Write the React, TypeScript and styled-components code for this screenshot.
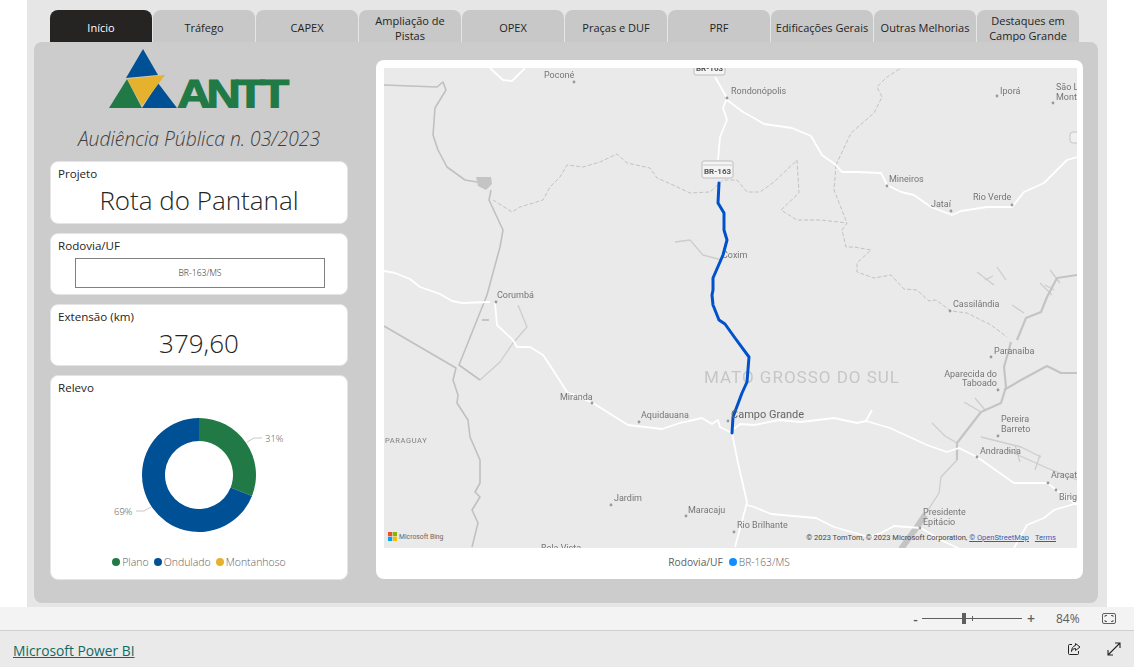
import React from 'react';
import styled, { createGlobalStyle } from 'styled-components';

const GlobalStyle = createGlobalStyle`
  html, body {
    margin: 0;
    padding: 0;
    background: #fff;
    overflow: hidden;
  }
  body {
    font-family: "Open Sans", "Noto Sans", sans-serif;
    color: #252423;
  }
`;

const Page = styled.div`
  width: 1134px;
  height: 667px;
  display: flex;
  flex-direction: column;
`;

const Report = styled.div`
  width: 1080px;
  height: 607px;
  margin-left: 27px;
  padding-top: 10px;
  box-sizing: border-box;
  background: #e6e6e6;
`;

const TabRow = styled.div`
  display: grid;
  grid-template-columns: repeat(10, 102px);
  gap: 1px;
  margin-left: 23px;
  height: 32px;
`;

const Tab = styled.div<{ $active?: boolean }>`
  display: flex;
  align-items: center;
  justify-content: center;
  height: 36px;
  box-sizing: border-box;
  border-radius: 8px 8px 0 0;
  background: ${props => (props.$active ? '#252423' : '#c8c8c8')};
  color: ${props => (props.$active ? '#ffffff' : '#252423')};
  font-size: 11px;
  line-height: 15.5px;
  text-align: center;
`;

const Panel = styled.div`
  position: relative;
  display: flex;
  gap: 28px;
  width: 1064px;
  height: 561px;
  margin-left: 7px;
  padding: 6px 15px 23px 16px;
  box-sizing: border-box;
  border-radius: 8px;
  background: #cccccc;
`;

const LeftColumn = styled.div`
  display: flex;
  flex-direction: column;
  width: 298px;
  flex: none;
`;

const LogoBox = styled.div`
  display: flex;
  justify-content: center;
  height: 60px;
`;

const Title = styled.div`
  margin: 20px 0 11px;
  font-size: 19.3px;
  line-height: 22.3px;
  font-weight: 300;
  font-style: italic;
  text-align: center;
  white-space: nowrap;
  color: #3d3c3b;
`;

const CardStack = styled.div`
  display: flex;
  flex-direction: column;
  gap: 9px;
  flex: 1;
`;

const Card = styled.div`
  height: 62.3px;
  box-sizing: border-box;
  padding: 4px 7px 0;
  border-radius: 8px;
  border: 1px solid #e4e4e4;
  background: #fff;
`;

const ChartCard = styled(Card)`
  display: flex;
  flex-direction: column;
  height: auto;
  flex: 1;
`;

const CardLabel = styled.div`
  font-size: 11.6px;
  line-height: 16px;
  font-weight: 500;
  color: #252423;
`;

const BigValue = styled.div`
  font-size: 26px;
  line-height: 36px;
  font-weight: 300;
  text-align: center;
  color: #252423;
`;

const SlicerBox = styled.div`
  display: flex;
  align-items: center;
  justify-content: center;
  height: 30px;
  margin: 4px 15px 0 17px;
  box-sizing: border-box;
  border: 1px solid #808080;
  font-size: 8.6px;
  font-weight: 300;
  color: #252423;
`;

const DonutSvg = styled.svg`
  display: block;
  width: 296px;
  height: 159px;
  margin: 0 -7px;
  flex: none;
`;

const Legend = styled.div<{ $gap: number }>`
  display: flex;
  align-items: center;
  justify-content: center;
  gap: ${props => props.$gap}px;
  font-size: 10.5px;
  font-weight: 300;
  color: #605e5c;
`;

const LegendItem = styled.span`
  display: flex;
  align-items: center;
  gap: 2px;
`;

const Dot = styled.i<{ $color: string }>`
  width: 8px;
  height: 8px;
  border-radius: 50%;
  background: ${props => props.$color};
`;

const MapCard = styled.div`
  display: flex;
  flex-direction: column;
  width: 707px;
  height: 519px;
  margin-top: 12px;
  padding: 8px 6px 0 8px;
  box-sizing: border-box;
  border-radius: 8px;
  background: #fff;
`;

const MapArea = styled.div`
  position: relative;
  width: 693px;
  height: 480px;
  flex: none;
  overflow: hidden;
  background: #eaeaea;
`;

const MapSvg = styled.svg`
  display: block;
  width: 693px;
  height: 480px;
  filter: blur(0.3px);
  font-family: Roboto, "Liberation Sans", sans-serif;
`;

const Attribution = styled.div`
  position: absolute;
  right: 21px;
  bottom: 5px;
  font-family: Roboto, "Liberation Sans", sans-serif;
  font-size: 7.5px;
  line-height: 10px;
  color: #444;
  white-space: nowrap;

  a {
    color: #3b5bb5;
    text-decoration: underline;
  }
  a + a {
    margin-left: 4px;
  }
`;

const BingMark = styled.div`
  position: absolute;
  left: 4px;
  bottom: 7px;
  display: flex;
  align-items: center;
  gap: 2px;
  font-family: Roboto, "Liberation Sans", sans-serif;
  font-size: 6.8px;
  color: #666;

  svg {
    display: block;
  }
`;

const MapLegend = styled(Legend)`
  height: 27px;
  font-size: 10.2px;
  margin-right: 3px;
`;

const LegendTitle = styled.span`
  margin-right: 6px;
  font-weight: 400;
  color: #605e5c;
`;

const ZoomBar = styled.div`
  display: flex;
  align-items: center;
  height: 23px;
  border-bottom: 1px solid #cfcfcf;
  background: #f3f3f3;
  padding-left: 912px;
  font-size: 12px;
  color: #605e5c;
`;

const ZoomButton = styled.span`
  width: 7px;
  font-size: 14px;
  line-height: 14px;
  font-weight: 600;
  text-align: center;
`;

const ZoomTrack = styled.div`
  position: relative;
  width: 100px;
  height: 1px;
  margin: 0 5px 0 3px;
  background: #605e5c;
`;

const ZoomThumb = styled.i`
  position: absolute;
  left: 40px;
  top: -5px;
  width: 4px;
  height: 11px;
  background: #605e5c;
`;

const ZoomTick = styled.i`
  position: absolute;
  left: 50px;
  top: -2px;
  width: 1px;
  height: 5px;
  background: #605e5c;
`;

const ZoomValue = styled.span`
  margin-left: 22px;
  width: 23px;
  white-space: nowrap;
`;

const FitIcon = styled.svg`
  margin-left: 23px;
  display: block;
`;

const Footer = styled.div`
  display: flex;
  align-items: center;
  justify-content: space-between;
  flex: 1;
  padding: 3px 13px 0;
  background: #eaeaea;
`;

const PowerBiLink = styled.a`
  font-size: 13.8px;
  color: #0f6a62;
  text-decoration: underline;
`;

const FooterIcons = styled.div`
  display: flex;
  align-items: center;
  gap: 26px;
  margin-top: -3px;

  svg {
    display: block;
  }
`;

const tabs = [
  'Início',
  'Tráfego',
  'CAPEX',
  'Ampliação de Pistas',
  'OPEX',
  'Praças e DUF',
  'PRF',
  'Edificações Gerais',
  'Outras Melhorias',
  'Destaques em Campo Grande',
];

const roads = [
  '490,68 503,80 512,81 525,68',
  '715,77 727,98 723,108 727,120 720,137 718,160',
  '727,100 743,112 754,118 764,124 792,128 811,136 822,155 836,165 842,172 857,172 881,173 887,185 901,192 914,195 931,207 952,215 961,211 987,207 1012,207 1024,192 1044,183 1067,160 1077,157',
  '384,271 395,273 410,279 420,287 440,294 452,301 462,303 490,302',
  '495,303 497,325 513,340 517,347 530,347 543,355 553,370 567,392 593,403 628,425 662,429 680,423 702,418 712,424 718,420 720,427 730,432 740,424 754,425 779,420 801,422 834,418 857,423 866,421 890,428 927,445 947,452 959,448 977,457 1014,483 1047,483 1077,505',
  '866,421 872,410',
  '732,433 738,463 747,502 745,510 735,547',
  '747,505 754,507 771,514 816,518 834,527 869,537 881,533 894,526 921,528 941,540 960,549',
  '1014,548 1027,525 1044,518 1054,510 1077,503',
];

const borders = [
  '384,85 437,87 443,82 446,90 435,108 433,135 438,150 447,167 465,180 477,182',
  '491,190 489,200 503,230 500,247 487,295 459,365 480,380',
  '384,326 456,368 453,380 458,395 457,403 468,420 470,437 480,460 480,483 475,492 480,497 472,510 478,523 472,547',
];

const thinRivers = [
  '480,380 500,362 513,343 527,327 518,305',
  '675,242 690,240 703,255 722,260',
  '957,460 941,477 939,493 917,527',
  '1045,285 1054,290',
  '1050,270 1060,283',
  '1040,283 1052,295',
  '977,272 994,285',
  '985,280 993,276',
  '997,267 1006,280',
  '1012,305 1024,313',
  '932,423 945,436 957,443',
  '964,402 981,412',
  '975,398 985,410',
  '981,437 1021,447 1041,457',
  '1007,450 1047,468 1077,480',
  '1015,445 1020,462',
  '1040,455 1035,470',
];

const mainRivers = [
  '1011,342 1004,367 1006,387 1001,403 981,412 957,443 957,460',
  '1004,390 1021,380 1047,366 1061,373 1077,373',
  '1017,340 1026,318 1041,312 1047,297 1057,278 1077,275',
];

const dashed = [
  '493,200 512,212 520,207 543,200 550,187 560,177 567,165 583,167 600,162 617,154 627,163 650,168 657,178 673,185 690,193 710,192 723,180 737,180 747,192 760,192 774,182 797,160 799,193 781,210 797,220 821,220 847,223 842,230 846,247 854,247 871,250 857,263 857,272 874,278 891,275 904,289 917,290 929,301 936,300 951,311 967,313 991,325 1007,337',
  '836,165 834,190 847,223',
  '836,165 851,133 874,113 882,97 877,87 887,77 901,68',
];

const route =
  '719,183 718,203 724,213 724,230 727,240 723,255 713,278 713,290 712,295 713,305 719,320 725,324 735,338 749,357 747,382 742,393 733,417 732,433';

const cityDots = [
  [574, 82], [727, 98], [997, 96], [1053, 103], [887, 186], [951, 211], [1012, 205],
  [496, 302], [592, 403], [639, 422], [728, 421], [950, 311], [991, 357], [998, 390],
  [998, 436], [977, 457], [1048, 483], [1056, 490], [920, 528], [611, 505], [686, 516], [734, 532],
];

const cityLabels: { text: string; x: number; y: number; end?: boolean }[] = [
  { text: 'Poconé', x: 544, y: 78 },
  { text: 'Rondonópolis', x: 731, y: 94 },
  { text: 'Iporá', x: 1000, y: 94 },
  { text: 'São Luís de', x: 1056, y: 90 },
  { text: 'Montes Belos', x: 1056, y: 100 },
  { text: 'Mineiros', x: 889, y: 182 },
  { text: 'Jataí', x: 931, y: 207 },
  { text: 'Rio Verde', x: 973, y: 200 },
  { text: 'Coxim', x: 722, y: 258 },
  { text: 'Corumbá', x: 497, y: 298 },
  { text: 'Miranda', x: 560, y: 400 },
  { text: 'Aquidauana', x: 641, y: 418 },
  { text: 'Cassilândia', x: 953, y: 307 },
  { text: 'Paranaíba', x: 994, y: 354 },
  { text: 'Aparecida do', x: 997, y: 377, end: true },
  { text: 'Taboado', x: 997, y: 386, end: true },
  { text: 'Pereira', x: 1001, y: 422 },
  { text: 'Barreto', x: 1001, y: 432 },
  { text: 'Andradina', x: 980, y: 454 },
  { text: 'Araçatuba', x: 1051, y: 478 },
  { text: 'Birigui', x: 1059, y: 500 },
  { text: 'Presidente', x: 923, y: 515 },
  { text: 'Epitácio', x: 923, y: 525 },
  { text: 'Jardim', x: 614, y: 501 },
  { text: 'Maracaju', x: 688, y: 513 },
  { text: 'Rio Brilhante', x: 737, y: 528 },
  { text: 'Bela Vista', x: 541, y: 551 },
];

const donutPath = (start: number, end: number) => {
  const R = 57;
  const r = 34;
  const pt = (rad: number, frac: number) => {
    const a = frac * 2 * Math.PI - Math.PI / 2;
    return `${(148 + rad * Math.cos(a)).toFixed(2)} ${(79 + rad * Math.sin(a)).toFixed(2)}`;
  };
  const large = end - start > 0.5 ? 1 : 0;
  return `M${pt(R, start)} A${R} ${R} 0 ${large} 1 ${pt(R, end)} L${pt(r, end)} A${r} ${r} 0 ${large} 0 ${pt(r, start)} Z`;
};

const Logo = () => (
  <svg width="182" height="60" viewBox="109 48 182 60">
    <polygon points="144,49 127,78 159,75" fill="#005096" />
    <polygon points="110,108 128,79 143,108" fill="#217a45" />
    <polygon points="143,108 159,83 178,108" fill="#005096" />
    <polygon points="128,79 166,75 143,106" fill="#e6b22e" />
    <text
      transform="translate(178 107.6) scale(1.17 1)"
      letterSpacing="-4"
      fontFamily="Liberation Sans, sans-serif"
      fontWeight="700"
      fontSize="40.5"
      fill="#217a45"
      stroke="#217a45"
      strokeWidth="1.2"
    >
      ANTT
    </text>
  </svg>
);

const Shield = ({ x, y }: { x: number; y: number }) => (
  <g>
    <rect x={x} y={y} width="31" height="17" rx="2" fill="#f4f4f4" stroke="#bdbdbd" />
    <line x1={x + 1} y1={y + 4} x2={x + 30} y2={y + 4} stroke="#c8c8c8" />
    <text x={x + 15.5} y={y + 13} fontSize="8" fontWeight="700" textAnchor="middle" fill="#555">
      BR-163
    </text>
  </g>
);

const MapDrawing = () => (
  <MapSvg viewBox="384 68 693 480">
    {thinRivers.map(p => (
      <polyline key={p} points={p} fill="none" stroke="#cdcdcd" strokeWidth="1.3" strokeLinejoin="round" />
    ))}
    {mainRivers.map(p => (
      <polyline key={p} points={p} fill="none" stroke="#c4c4c4" strokeWidth="2.2" strokeLinejoin="round" />
    ))}
    <polyline points="925,515 917,527 901,549" fill="none" stroke="#c4c4c4" strokeWidth="6" />
    <polygon points="476,177 491,177 492,184 486,190 478,186" fill="#c4c4c4" />
    <rect x="482" y="319" width="7" height="2" fill="#c4c4c4" />
    {borders.map(p => (
      <polyline key={p} points={p} fill="none" stroke="#c0c0c0" strokeWidth="1.6" strokeLinejoin="round" />
    ))}
    {dashed.map(p => (
      <polyline key={p} points={p} fill="none" stroke="#bdbdbd" strokeWidth="0.9" strokeDasharray="4 2" />
    ))}
    {roads.map(p => (
      <polyline key={p} points={p} fill="none" stroke="#ffffff" strokeWidth="1.8" strokeLinejoin="round" />
    ))}
    {cityDots.map(([x, y]) => (
      <circle key={`${x}-${y}`} cx={x} cy={y} r="1.4" fill="#9a9a9a" />
    ))}
    {cityLabels.map(c => (
      <text key={c.text} x={c.x} y={c.y} fontSize="9" fill="#767676" textAnchor={c.end ? 'end' : 'start'}>
        {c.text}
      </text>
    ))}
    <text x="704" y="383" fontSize="17" letterSpacing="1" fill="#c6c6c6">
      MATO GROSSO DO SUL
    </text>
    <text x="385" y="443" fontSize="7.5" letterSpacing="0.6" fill="#808080">
      PARAGUAY
    </text>
    <polyline points={route} fill="none" stroke="#0052cc" strokeWidth="3" strokeLinejoin="round" strokeLinecap="round" />
    <text x="731" y="418" fontSize="11" fill="#666">
      Campo Grande
    </text>
    <Shield x={702} y={161} />
    <Shield x={694} y={58} />
    <rect x="1070" y="132" width="14" height="11" rx="3" fill="#f0f0f0" stroke="#c4c4c4" />
  </MapSvg>
);

export default function App() {
  return (
    <Page>
      <GlobalStyle />
      <Report>
        <TabRow>
          {tabs.map((t, i) => (
            <Tab key={t} $active={i === 0}>
              {t === 'Ampliação de Pistas' ? (
                <span>Ampliação de<br />Pistas</span>
              ) : t === 'Destaques em Campo Grande' ? (
                <span>Destaques em<br />Campo Grande</span>
              ) : (
                t
              )}
            </Tab>
          ))}
        </TabRow>
        <Panel>
          <LeftColumn>
            <LogoBox>
              <Logo />
            </LogoBox>
            <Title>Audiência Pública n. 03/2023</Title>
            <CardStack>
              <Card>
                <CardLabel>Projeto</CardLabel>
                <BigValue>Rota do Pantanal</BigValue>
              </Card>
              <Card>
                <CardLabel>Rodovia/UF</CardLabel>
                <SlicerBox>BR-163/MS</SlicerBox>
              </Card>
              <Card>
                <CardLabel>Extensão (km)</CardLabel>
                <BigValue>379,60</BigValue>
              </Card>
              <ChartCard>
                <CardLabel>Relevo</CardLabel>
                <DonutSvg viewBox="0 0 296 159" fontFamily="Open Sans, sans-serif">
                  <path d={donutPath(0, 0.31)} fill="#217a45" />
                  <path d={donutPath(0.31, 1)} fill="#005096" />
                  <polyline points="196,46 203,42 211,42" fill="none" stroke="#c8c8c8" />
                  <polyline points="85,115 93,115 100,111" fill="none" stroke="#c8c8c8" />
                  <text x="214" y="46" fontSize="9.5" fontWeight="300" fill="#555">31%</text>
                  <text x="63" y="119" fontSize="9.5" fontWeight="300" fill="#555">69%</text>
                </DonutSvg>
                <Legend $gap={5}>
                  <LegendItem><Dot $color="#217a45" />Plano</LegendItem>
                  <LegendItem><Dot $color="#005096" />Ondulado</LegendItem>
                  <LegendItem><Dot $color="#e6b22e" />Montanhoso</LegendItem>
                </Legend>
              </ChartCard>
            </CardStack>
          </LeftColumn>
          <MapCard>
            <MapArea>
              <MapDrawing />
              <BingMark>
                <svg width="9" height="9" viewBox="0 0 9 9">
                  <rect width="4.2" height="4.2" fill="#f25022" />
                  <rect x="4.8" width="4.2" height="4.2" fill="#7fba00" />
                  <rect y="4.8" width="4.2" height="4.2" fill="#00a4ef" />
                  <rect x="4.8" y="4.8" width="4.2" height="4.2" fill="#ffb900" />
                </svg>
                Microsoft Bing
              </BingMark>
              <Attribution>
                © 2023 TomTom, © 2023 Microsoft Corporation, <a>© OpenStreetMap</a> <a>Terms</a>
              </Attribution>
            </MapArea>
            <MapLegend $gap={0}>
              <LegendTitle>Rodovia/UF</LegendTitle>
              <LegendItem><Dot $color="#118dff" />BR-163/MS</LegendItem>
            </MapLegend>
          </MapCard>
        </Panel>
      </Report>
      <ZoomBar>
        <ZoomButton>-</ZoomButton>
        <ZoomTrack>
          <ZoomThumb />
          <ZoomTick />
        </ZoomTrack>
        <ZoomButton>+</ZoomButton>
        <ZoomValue>84%</ZoomValue>
        <FitIcon width="14" height="11" viewBox="0 0 14 11" fill="none" stroke="#605e5c">
          <rect x="0.5" y="0.5" width="13" height="10" rx="1.5" />
          <path d="M3 4V2.5H5M9 2.5H11V4M11 7V8.5H9M5 8.5H3V7" />
        </FitIcon>
      </ZoomBar>
      <Footer>
        <PowerBiLink>Microsoft Power BI</PowerBiLink>
        <FooterIcons>
          <svg width="14" height="14" viewBox="0 0 14 14" fill="none" stroke="#252423" strokeWidth="1">
            <path d="M5 2.5H2.5a1 1 0 0 0-1 1v8a1 1 0 0 0 1 1h8a1 1 0 0 0 1-1V9" />
            <path d="M8.5 1.5 13 5 8.5 8.5V6.5C6.5 6.5 5 7.5 4.5 9.5 4.5 6.5 6 4 8.5 3.5Z" />
          </svg>
          <svg width="14" height="14" viewBox="0 0 14 14" fill="none" stroke="#252423" strokeWidth="1.1">
            <path d="M1 13 13 1M8 1H13V6M1 8V13H6" />
          </svg>
        </FooterIcons>
      </Footer>
    </Page>
  );
}
